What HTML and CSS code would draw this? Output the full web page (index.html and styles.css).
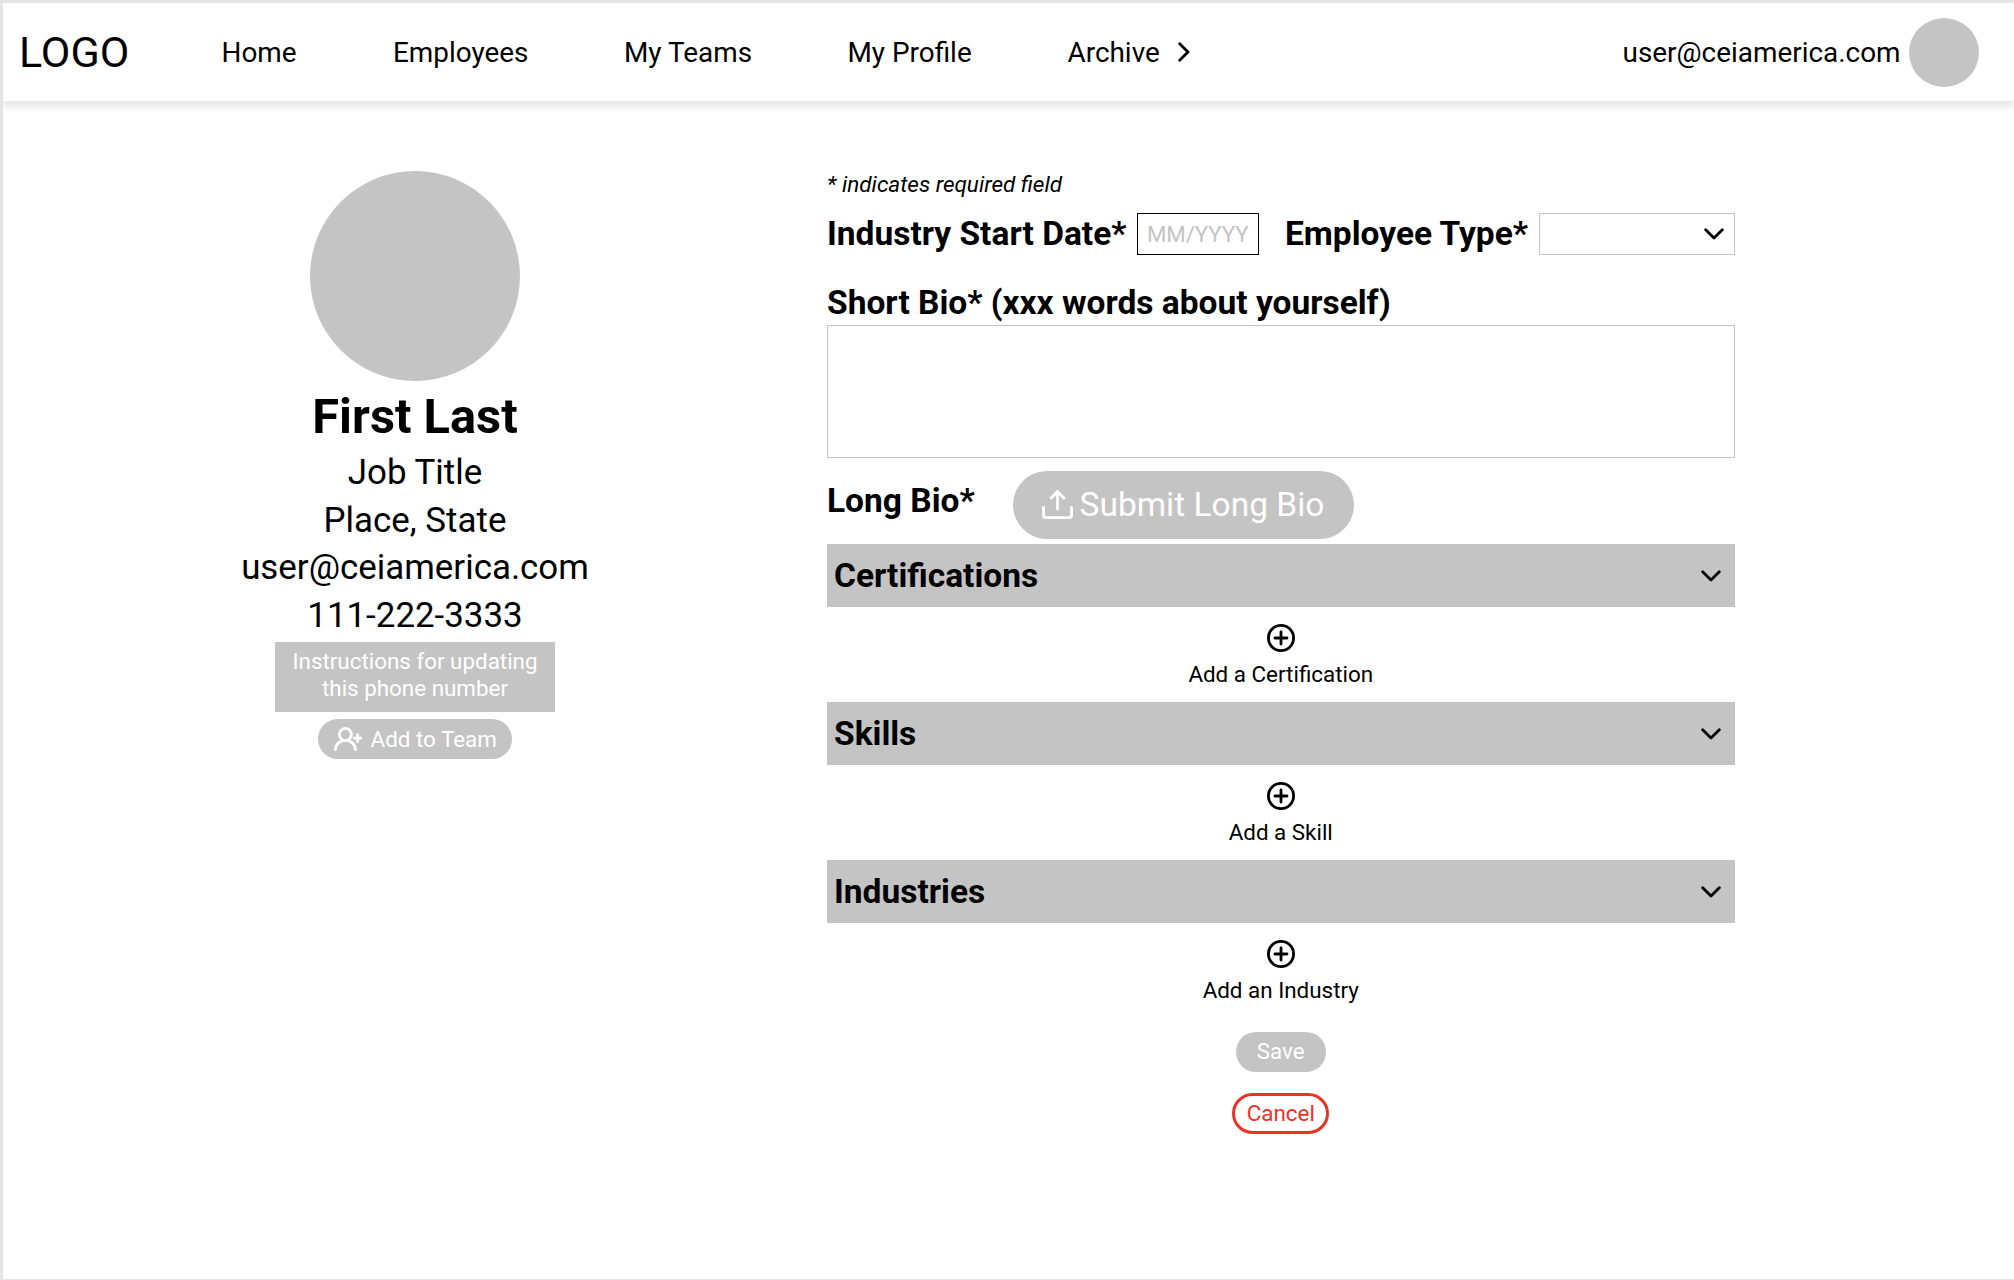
FILE: index.html
```html
<!DOCTYPE html>
<html lang="en">
<head>
<meta charset="utf-8">
<title>Edit Profile</title>
<link rel="stylesheet" href="styles.css">
</head>
<body>
<svg class="sprite" aria-hidden="true">
  <symbol id="chevron-down" viewBox="0 0 20 12"><path d="M1.7 1.7 10 10 18.3 1.7"/></symbol>
  <symbol id="plus-circle" viewBox="0 0 28 28"><circle cx="14" cy="14" r="12.6"/><path d="M14 8v12M8 14h12"/></symbol>
</svg>
<div class="page">
  <header class="topbar">
    <div class="logo">LOGO</div>
    <nav class="nav">
      <a class="nav-item home">Home</a>
      <a class="nav-item employees">Employees</a>
      <a class="nav-item teams">My Teams</a>
      <a class="nav-item profile-link">My Profile</a>
      <a class="nav-item archive">Archive
        <svg class="icon chevron-right" viewBox="0 0 12 20"><path d="M1.7 1.7 10 10 1.7 18.3"/></svg>
      </a>
    </nav>
    <div class="account">
      <span>user@ceiamerica.com</span>
      <span class="account-avatar"></span>
    </div>
  </header>

  <main class="content">
    <aside class="profile">
      <div class="avatar"></div>
      <h1 class="name">First Last</h1>
      <div class="details">
        <p>Job Title</p>
        <p>Place, State</p>
        <p>user@ceiamerica.com</p>
        <p>111-222-3333</p>
      </div>
      <div class="instructions">Instructions for updating<br>this phone number</div>
      <button class="btn add-team" type="button">
        <svg class="icon user-plus" viewBox="0 0 28 24"><circle cx="11.4" cy="7.4" r="6"/><path d="M1.4 22.6C1.8 17 6 13.4 11.4 13.4S21 17 21.4 22.6M23.6 7.6v7M20.1 11.1h7"/></svg>
        Add to Team
      </button>
    </aside>

    <form class="form">
      <p class="hint">* indicates required field</p>
      <div class="row">
        <label class="label" for="start">Industry Start Date*</label>
        <input class="date" id="start" type="text" placeholder="MM/YYYY">
        <label class="label type-label" for="type">Employee Type*</label>
        <div class="select" id="type"><svg class="icon chevron"><use href="#chevron-down"/></svg></div>
      </div>
      <label class="label bio-label" for="bio">Short Bio* (xxx words about yourself)</label>
      <textarea class="bio" id="bio"></textarea>
      <div class="long-bio">
        <span class="label long-label">Long Bio*</span>
        <button class="btn submit-bio" type="button">
          <svg class="icon upload" viewBox="0 0 31 29"><path d="M15.5 19V1.8M9.2 8l6.3-6.4L21.8 8M1.5 17.4v7.8a2.4 2.4 0 0 0 2.4 2.4h23.2a2.4 2.4 0 0 0 2.4-2.4v-7.8"/></svg>
          Submit Long Bio
        </button>
      </div>

      <section class="section">
        <h2 class="section-head">Certifications <svg class="icon chevron"><use href="#chevron-down"/></svg></h2>
        <div class="add"><svg class="icon plus"><use href="#plus-circle"/></svg><span>Add a Certification</span></div>
      </section>
      <section class="section">
        <h2 class="section-head">Skills <svg class="icon chevron"><use href="#chevron-down"/></svg></h2>
        <div class="add"><svg class="icon plus"><use href="#plus-circle"/></svg><span>Add a Skill</span></div>
      </section>
      <section class="section">
        <h2 class="section-head">Industries <svg class="icon chevron"><use href="#chevron-down"/></svg></h2>
        <div class="add"><svg class="icon plus"><use href="#plus-circle"/></svg><span>Add an Industry</span></div>
      </section>

      <div class="actions">
        <button class="btn save" type="button">Save</button>
        <button class="btn cancel" type="button">Cancel</button>
      </div>
    </form>
  </main>
</div>
</body>
</html>
```

FILE: styles.css
```css
* { box-sizing: border-box; }

body {
  margin: 0;
  font-family: Roboto, "Liberation Sans", sans-serif;
  color: #000;
}

h1, h2, p { margin: 0; }

.sprite { display: none; }

.icon {
  flex: none;
  fill: none;
  stroke: currentColor;
  stroke-width: 2.8;
  stroke-linecap: round;
  stroke-linejoin: round;
}

.page {
  height: 1280px;
  border: solid #e5e5e5;
  border-width: 3px 0 1px 3px;
  background: #fff;
  overflow: hidden;
}

/* Top bar */
.topbar {
  display: flex;
  align-items: center;
  height: 98px;
  padding: 0 35px 0 16px;
  font-size: 27.9px;
  box-shadow: 0 6px 8px rgba(0, 0, 0, .1);
}

.logo { width: 202.5px; font-size: 43px; }

.nav { display: flex; }
.nav-item { display: flex; align-items: center; white-space: nowrap; }
.home { width: 171.5px; }
.employees { width: 231px; }
.teams { width: 223.5px; }
.profile-link { width: 220px; }
.archive { gap: 18px; }
.chevron-right { width: 12px; height: 20px; }

.account { display: flex; align-items: center; gap: 8.5px; margin-left: auto; }
.account-avatar { width: 70px; height: 69px; border-radius: 50%; background: #c4c4c4; }

/* Columns */
.content { display: flex; align-items: flex-start; padding: 70px 0 0 212px; }

/* Profile summary */
.profile {
  display: flex;
  flex-direction: column;
  align-items: center;
  width: 400px;
  margin-right: 212px;
  text-align: center;
}
.avatar { width: 210px; height: 210px; border-radius: 50%; background: #c4c4c4; }
.name { margin: 6.5px 0 3.5px; font-size: 48.8px; line-height: 58px; font-weight: 700; }
.details { font-size: 34.9px; line-height: 47.5px; }
.instructions {
  width: 280px;
  height: 69.5px;
  margin-top: 3px;
  padding-top: 6px;
  background: #c4c4c4;
  color: #fff;
  font-size: 22.4px;
  line-height: 26.5px;
}

.btn {
  display: flex;
  align-items: center;
  justify-content: center;
  padding: 0;
  border: 0;
  border-radius: 40px;
  background: #c4c4c4;
  color: #fff;
  font: 400 22.4px/26px Roboto, "Liberation Sans", sans-serif;
}
.add-team { gap: 8.5px; width: 194px; height: 40.5px; margin-top: 7px; padding-left: 1px; }
.user-plus { width: 28px; height: 24px; }

/* Form */
.form { display: flex; flex-direction: column; width: 907.5px; }
.hint { margin: 0 0 16px; font-size: 22.5px; line-height: 26px; font-style: italic; }

.row { display: flex; align-items: center; height: 42px; }
.label { font-size: 33.5px; line-height: 40px; font-weight: 700; white-space: nowrap; }
.date {
  width: 122px;
  height: 42px;
  margin-left: auto;
  padding: 0 0 0 9px;
  border: 1.4px solid #000;
  font: 400 22.3px/26px Roboto, "Liberation Sans", sans-serif;
  letter-spacing: -.1px;
}
.date::placeholder { color: #c4c4c4; opacity: 1; }
.type-label { width: 254px; margin-left: 26px; }
.select {
  display: flex;
  align-items: center;
  justify-content: flex-end;
  width: 195.5px;
  height: 42px;
  padding-right: 10px;
  border: 1.4px solid #c4c4c4;
}
.chevron { width: 20px; height: 12px; }

.bio-label { margin: 28px 0 2px; }
.bio { height: 133px; margin: 0; border: 1.4px solid #c4c4c4; resize: none; }

.long-bio { display: flex; margin: 13px 0 5.5px; }
.long-label { width: 185.5px; margin-top: 10px; }
.submit-bio { gap: 7px; width: 341px; height: 67.5px; font-size: 33.5px; line-height: 40px; }
.upload { width: 31px; height: 29px; }

.section { height: 158px; }
.section-head {
  display: flex;
  align-items: center;
  justify-content: space-between;
  height: 63px;
  padding: 0 14px 0 7px;
  background: #c4c4c4;
  font-size: 33.5px;
  line-height: 40px;
}
.add {
  display: flex;
  flex-direction: column;
  align-items: center;
  gap: 9.5px;
  padding-top: 16.5px;
  font-size: 22.4px;
  line-height: 26px;
}
.plus { width: 28px; height: 28px; }

.actions { display: flex; flex-direction: column; align-items: center; gap: 21px; margin-top: 13.5px; }
.save { width: 89.5px; height: 40.5px; padding-bottom: 1px; }
.cancel { width: 97px; height: 41px; padding-bottom: 1px; border: 3px solid #eb3223; background: #fff; color: #eb3223; }
```
